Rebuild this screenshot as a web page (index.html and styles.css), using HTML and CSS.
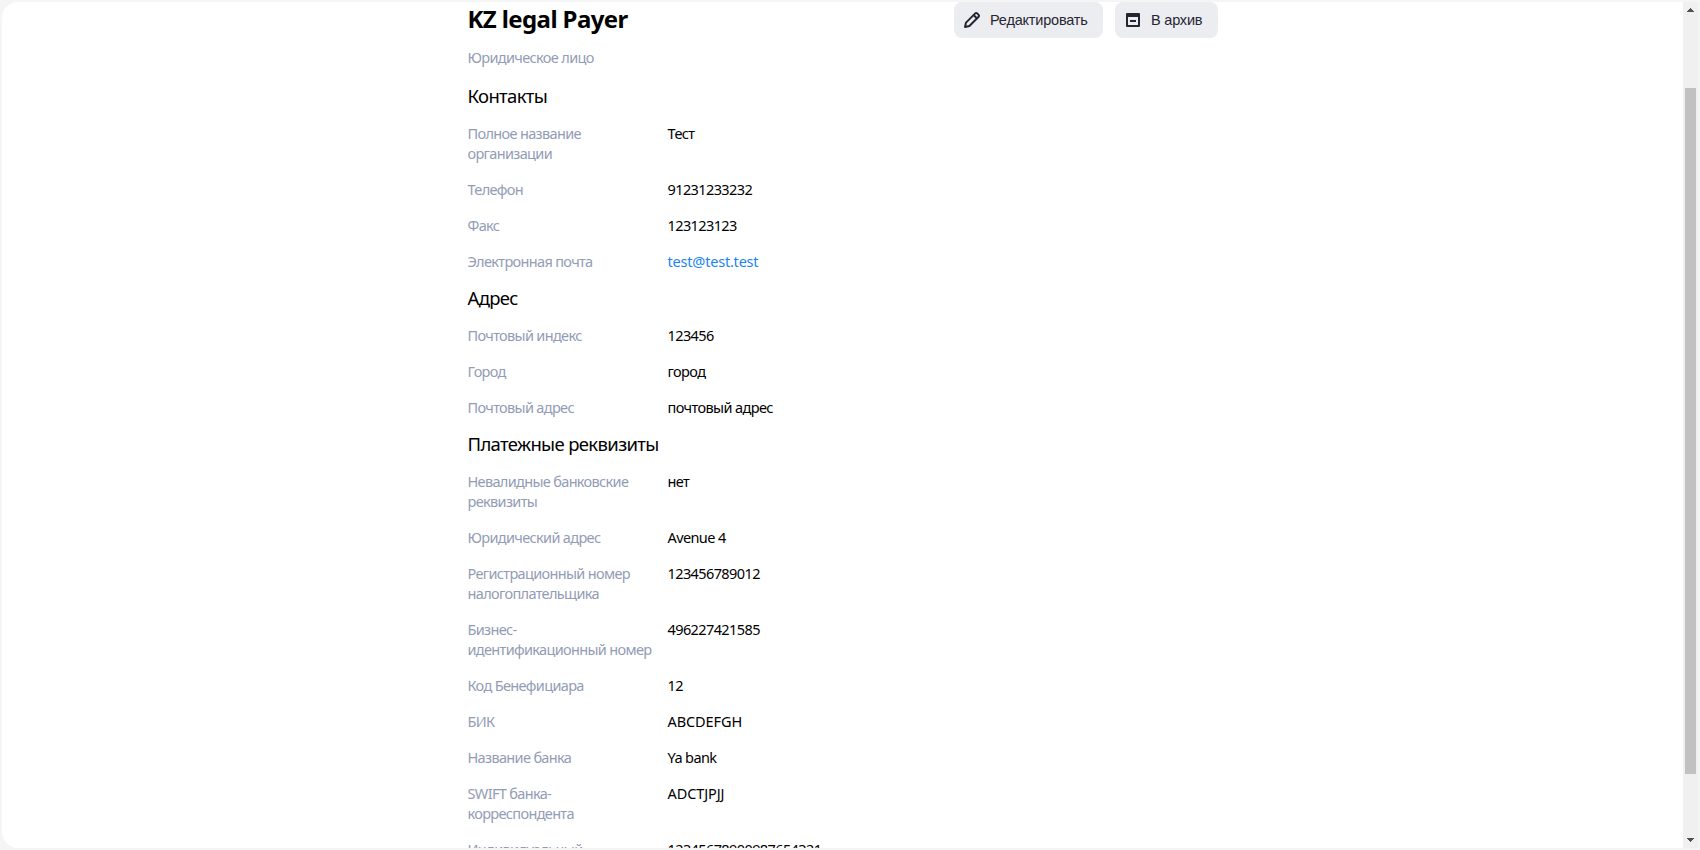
FILE: index.html
```html
<!DOCTYPE html>
<html lang="ru">
<head>
<meta charset="utf-8">
<title>KZ legal Payer</title>
<link rel="stylesheet" href="styles.css">
</head>
<body>
<div class="frame">
  <main class="content">
    <header class="header">
      <h1 class="title">KZ legal Payer</h1>
      <div class="actions">
        <button class="button button-edit">
          <svg class="icon" width="18" height="18" viewBox="0 0 18 18" fill="none" stroke="#262633" stroke-width="2" stroke-linejoin="round"><path d="M2 16l1-4.400 9-9a1.700 1.700 0 0 1 2.400 0l1 1a1.700 1.700 0 0 1 0 2.400l-9 9z"/><path d="M10.800 4.200l3 3"/></svg>
          <span>Редактировать</span>
        </button>
        <button class="button button-archive">
          <svg class="icon" width="14" height="14" viewBox="0 0 14 14"><path fill="#262633" fill-rule="evenodd" d="M1 0h12a1 1 0 0 1 1 1v12a1 1 0 0 1-1 1H1a1 1 0 0 1-1-1V1a1 1 0 0 1 1-1zM2 4v8h10V4z"/><path fill="#262633" d="M4 7h6v2H4z"/></svg>
          <span>В архив</span>
        </button>
      </div>
    </header>
    <div class="kind">Юридическое лицо</div>

    <h2 class="section">Контакты</h2>
    <dl class="rows">
      <dt>Полное название<br>организации</dt><dd>Тест</dd>
      <dt>Телефон</dt><dd class="num">91231233232</dd>
      <dt>Факс</dt><dd class="num">123123123</dd>
      <dt>Электронная почта</dt><dd><a class="link" href="mailto:test@test.test">test@test.test</a></dd>
    </dl>

    <h2 class="section">Адрес</h2>
    <dl class="rows">
      <dt>Почтовый индекс</dt><dd class="num">123456</dd>
      <dt>Город</dt><dd>город</dd>
      <dt>Почтовый адрес</dt><dd>почтовый адрес</dd>
    </dl>

    <h2 class="section">Платежные реквизиты</h2>
    <dl class="rows">
      <dt>Невалидные банковские<br>реквизиты</dt><dd>нет</dd>
      <dt>Юридический адрес</dt><dd>Avenue 4</dd>
      <dt>Регистрационный номер<br>налогоплательщика</dt><dd class="num">123456789012</dd>
      <dt>Бизнес-<br>идентификационный номер</dt><dd class="num">496227421585</dd>
      <dt>Код Бенефициара</dt><dd class="num">12</dd>
      <dt>БИК</dt><dd class="caps">ABCDEFGH</dd>
      <dt>Название банка</dt><dd>Ya bank</dd>
      <dt>SWIFT банка-<br>корреспондента</dt><dd class="caps">ADCTJPJJ</dd>
      <dt>Индивидуальный</dt><dd class="num">12345678900987654321</dd>
    </dl>
  </main>
  <div class="scrollbar">
    <svg class="arrow" width="7" height="4" viewBox="0 0 7 4"><path fill="#505050" d="M3 0h1v1h1v1h1v1h1v1H0V3h1V2h1V1h1z"/></svg>
    <div class="thumb"></div>
    <svg class="arrow" width="7" height="4" viewBox="0 0 7 4"><path fill="#505050" d="M0 0h7v1H6v1H5v1H4v1H3V3H2V2H1V1H0z"/></svg>
  </div>
</div>
</body>
</html>
```
FILE: styles.css
```css
* { box-sizing: border-box; }
body {
  margin: 0;
  height: 850px;
  padding: 2px;
  overflow: hidden;
  background: #f5f5f6;
  color: #000;
  font: 14.5px/20px "Noto Sans", sans-serif;
}
.frame {
  display: flex;
  width: 1696px;
  height: 846px;
  overflow: hidden;
  background: #fff;
  border-radius: 16px 0 0 16px;
}
.content { flex: 1; padding-left: 465.5px; }
.header { display: flex; justify-content: space-between; width: 750.5px; height: 36px; }
.title { margin: 0; font-size: 24px; line-height: 33px; font-weight: 700; letter-spacing: -0.6px; white-space: nowrap; }
.actions { display: flex; gap: 12px; }
.button {
  display: flex;
  align-items: center;
  height: 36px;
  padding: 0;
  border: 0;
  border-radius: 8px;
  background: #ecedf1;
  color: #262633;
  font: 14.5px/20px "Liberation Sans", Arial, sans-serif;
  letter-spacing: -0.2px;
  white-space: nowrap;
}
.button-edit { width: 149px; padding-left: 9px; gap: 9px; }
.button-archive { width: 103px; padding-left: 11px; gap: 11px; }
.icon { flex: none; }
.kind { margin-top: 9px; color: #939cb5; letter-spacing: -0.65px; }
.section { margin: 15px 0 13px; font-size: 18.5px; line-height: 28px; font-weight: 400; letter-spacing: -0.65px; }
.rows {
  display: grid;
  grid-template-columns: 200px 1fr;
  row-gap: 16px;
  margin: 0 0 13px;
  letter-spacing: -0.66px;
  white-space: nowrap;
}
.rows + .section { margin-top: 12px; }
dt { color: #939cb5; }
dd { margin: 0; letter-spacing: -0.6px; }
.rows .num { letter-spacing: -0.6px; }
.rows .caps { letter-spacing: -0.1px; }
.link { color: #1a84f5; text-decoration: none; letter-spacing: -0.2px; }
.scrollbar {
  display: flex;
  flex-direction: column;
  align-items: center;
  width: 15px;
  padding: 6px 0;
  background: #f0f0f0;
}
.arrow { flex: none; }
.thumb { width: 11px; height: 686px; margin: 76px 0 auto; background: #c1c1c1; }
```
